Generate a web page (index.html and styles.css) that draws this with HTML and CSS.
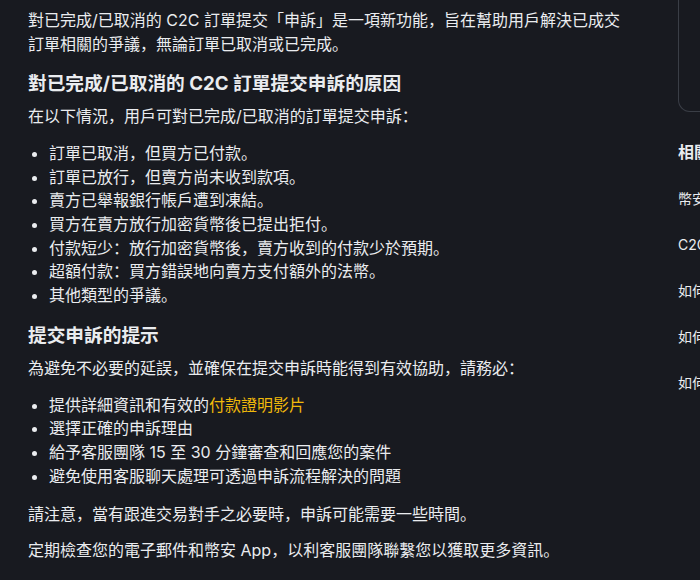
FILE: index.html
```html
<!DOCTYPE html>
<html lang="zh">
<head>
    <meta charset="UTF-8">
    <title>C2C 申訴</title>
    <link rel="stylesheet" href="styles.css">
</head>
<body>
    <div class="page">
        <div class="article">
            <p>對已完成/已取消的 C2C 訂單提交「申訴」是一項新功能，旨在幫助用戶解決已成交訂單相關的爭議，無論訂單已取消或已完成。</p>
            <h2>對已完成/已取消的 C2C 訂單提交申訴的原因</h2>
            <p>在以下情況，用戶可對已完成/已取消的訂單提交申訴：</p>
            <ul>
                <li>訂單已取消，但買方已付款。</li>
                <li>訂單已放行，但賣方尚未收到款項。</li>
                <li>賣方已舉報銀行帳戶遭到凍結。</li>
                <li>買方在賣方放行加密貨幣後已提出拒付。</li>
                <li>付款短少：放行加密貨幣後，賣方收到的付款少於預期。</li>
                <li>超額付款：買方錯誤地向賣方支付額外的法幣。</li>
                <li>其他類型的爭議。</li>
            </ul>
            <h2>提交申訴的提示</h2>
            <p>為避免不必要的延誤，並確保在提交申訴時能得到有效協助，請務必：</p>
            <ul>
                <li>提供詳細資訊和有效的<a href="#">付款證明影片</a></li>
                <li>選擇正確的申訴理由</li>
                <li>給予客服團隊 15 至 30 分鐘審查和回應您的案件</li>
                <li>避免使用客服聊天處理可透過申訴流程解決的問題</li>
            </ul>
            <p>請注意，當有跟進交易對手之必要時，申訴可能需要一些時間。</p>
            <p>定期檢查您的電子郵件和幣安 App，以利客服團隊聯繫您以獲取更多資訊。</p>
        </div>
        <div class="sidebar">
            <div class="card"></div>
            <div class="side-title">相關文章</div>
            <a class="side-link" href="#">幣安 C2C 申訴流程</a>
            <a class="side-link" href="#">C2C 交易常見問題</a>
            <a class="side-link" href="#">如何在幣安 C2C 購買加密貨幣</a>
            <a class="side-link" href="#">如何在幣安 C2C 出售加密貨幣</a>
            <a class="side-link" href="#">如何在 C2C 訂單提交申訴</a>
        </div>
    </div>
</body>
</html>
```

FILE: styles.css
```css
html, body {
    margin: 0;
    height: 100%;
    overflow: hidden;
    background: #181a20;
}
body {
    font-family: "Inter", "Noto Sans CJK SC", sans-serif;
    color: #eaecef;
}
.page {
    display: flex;
    gap: 50px;
    padding-left: 28px;
}
.article {
    flex: 0 0 600px;
    padding-top: 8px;
    font-size: 16px;
    line-height: 24px;
}
.article p {
    margin: 0 0 14px;
}
.article p:last-child {
    margin-bottom: 0;
    margin-top: -2px;
}
.article h2 {
    font-size: 18.7px;
    line-height: 28px;
    font-weight: 700;
    margin: 0 0 6px;
}
.article ul {
    margin: 0 0 14px;
    padding-left: 21px;
}
.article li {
    line-height: 23.67px;
}
.article a {
    color: #f0b90b;
    text-decoration: none;
}
.sidebar {
    flex: 0 0 300px;
    display: flex;
    flex-direction: column;
}
.card {
    height: 112px;
    box-sizing: border-box;
    border: 1px solid #3a3e46;
    border-top: 0;
    border-radius: 0 0 12px 12px;
}
.side-title {
    margin-top: 28px;
    font-size: 16px;
    line-height: 24px;
    font-weight: 700;
}
.side-link {
    margin-top: 24px;
    font-size: 14px;
    line-height: 22px;
    color: #eaecef;
    text-decoration: none;
    white-space: nowrap;
}
```
